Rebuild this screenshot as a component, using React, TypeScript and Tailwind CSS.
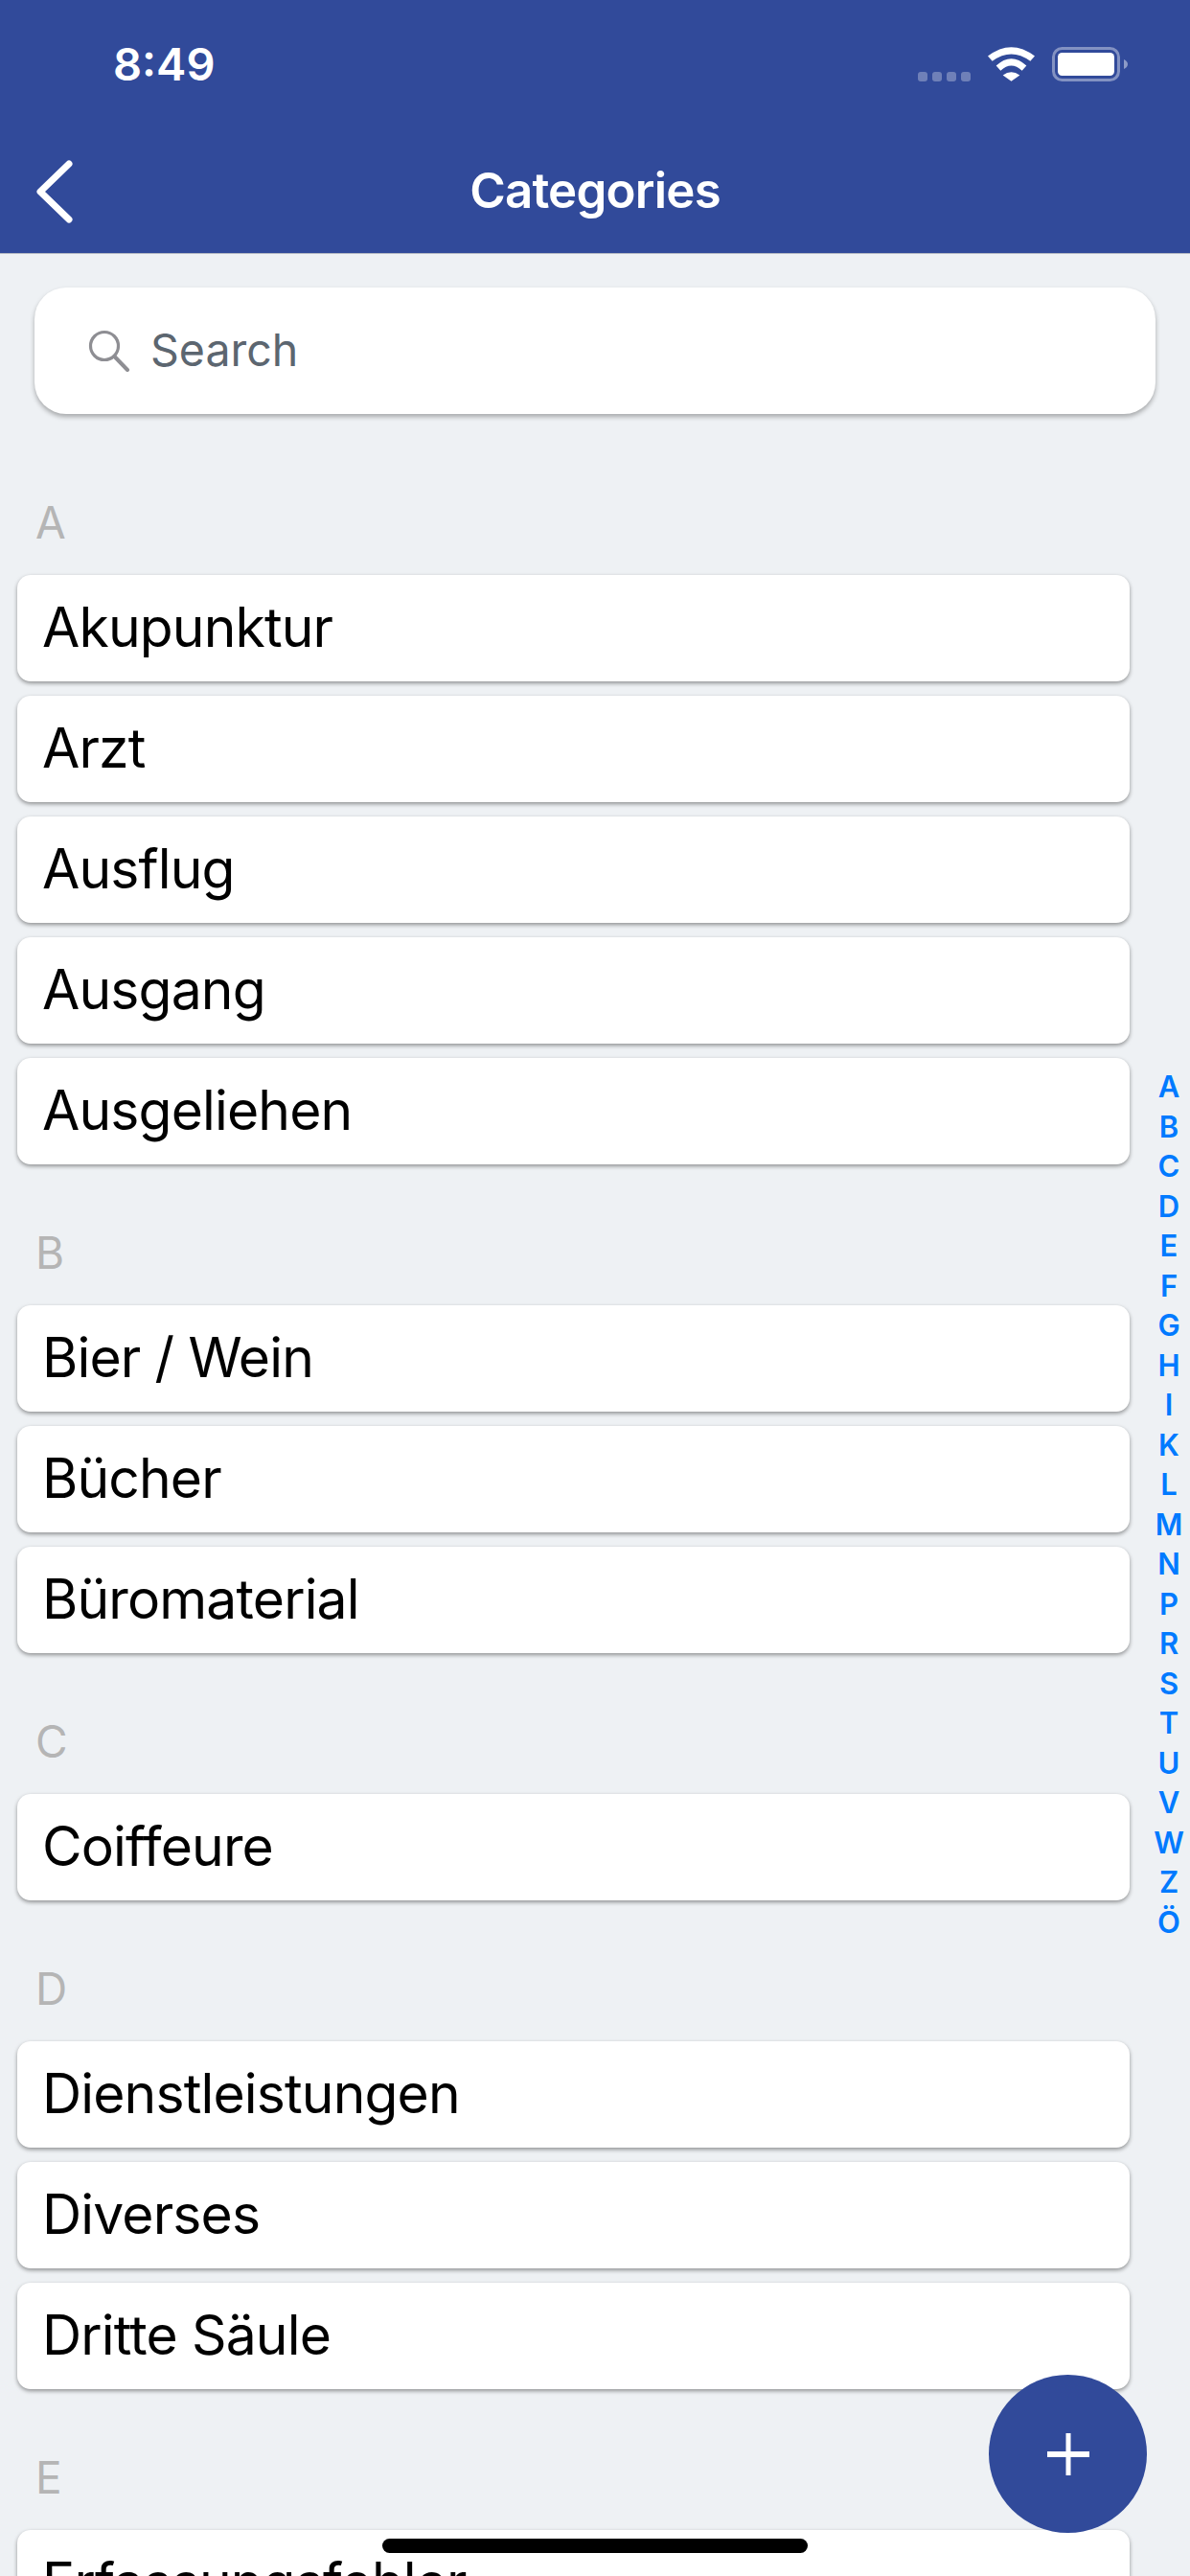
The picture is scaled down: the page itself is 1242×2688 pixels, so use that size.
const sections = [
  { letter: "A", items: ["Akupunktur", "Arzt", "Ausflug", "Ausgang", "Ausgeliehen"] },
  { letter: "B", items: ["Bier / Wein", "Bücher", "Büromaterial"] },
  { letter: "C", items: ["Coiffeure"] },
  { letter: "D", items: ["Dienstleistungen", "Diverses", "Dritte Säule"] },
  { letter: "E", items: ["Erfassungsfehler"] },
];

const indexLetters = "ABCDEFGHIKLMNPRSTUVWZÖ".split("");

function WifiIcon() {
  return (
    <svg width="49" height="36" viewBox="0 0 147 107" fill="white">
      <path d="M0 28 Q73.5 -28 147 28 L133 44 Q73.5 0 14 44 Z" />
      <path d="M26 58 Q73.5 14 121 58 L107 74 Q73.5 42 40 74 Z" />
      <path d="M47 88 Q73.5 68 100 88 L73.5 107 Z" />
    </svg>
  );
}

function BatteryIcon() {
  return (
    <svg width="79" height="36" viewBox="0 0 79 36">
      <rect x="1.5" y="1.5" width="68" height="33" rx="9" fill="none" stroke="white" strokeOpacity="0.4" strokeWidth="3" />
      <rect x="6" y="6" width="59" height="24" rx="4.5" fill="white" />
      <path d="M75 13 C77.5 14 79 16 79 18 C79 20 77.5 22 75 23 Z" fill="white" fillOpacity="0.45" />
    </svg>
  );
}

function StatusBar() {
  return (
    <div className="flex h-[136px] justify-between pl-[118px] pr-[65px]">
      <span className="mt-[39px] text-[47px] leading-[56px] font-semibold text-white">8:49</span>
      <div className="mt-[49px] flex h-[36px] items-start">
        <div className="mt-[26px] mr-[18px] flex gap-[5px]">
          {[0, 1, 2, 3].map((i) => (
            <div key={i} className="h-[10px] w-[10px] rounded-[3px] bg-white/30" />
          ))}
        </div>
        <WifiIcon />
        <div className="ml-[18px]">
          <BatteryIcon />
        </div>
      </div>
    </div>
  );
}

function Header() {
  return (
    <header className="h-[265px] border-b border-[#b4b9c4] bg-[#314a9a]">
      <StatusBar />
      <div className="flex h-[128px] items-center justify-between">
        <div className="w-[120px] pl-[36px]">
          <svg width="42" height="66" viewBox="0 0 42 66" fill="none" stroke="white" strokeWidth="7" strokeLinecap="round" strokeLinejoin="round">
            <path d="M36 4 L6 33 L36 62" />
          </svg>
        </div>
        <h1 className="-mt-[3px] text-[51px] leading-[64px] font-semibold tracking-[-0.8px] text-white">Categories</h1>
        <div className="w-[120px]" />
      </div>
    </header>
  );
}

function SearchBox() {
  return (
    <div className="mt-[35px] ml-[36px] flex h-[132px] w-[1170px] items-center rounded-[33px] bg-white pl-[56px] shadow-[0_3px_5px_rgba(0,0,0,0.3)]">
      <svg width="44" height="44" viewBox="0 0 44 44" fill="none" stroke="#8e8e93" strokeLinecap="round">
        <circle cx="17" cy="17" r="14.5" strokeWidth="3.2" />
        <path d="M27.5 28 L41 42" strokeWidth="4" />
      </svg>
      <span className="-mt-[2px] ml-[21px] text-[46.5px] leading-[60px] text-[#5c6670]">Search</span>
    </div>
  );
}

function CategoryRow({ name }: { name: string }) {
  return (
    <div className="mb-[15px] ml-[18px] flex h-[111px] w-[1161px] items-center rounded-[14px] bg-white pl-[26px] shadow-[0_2px_4px_rgba(0,0,0,0.4)]">
      <span className="-mt-[2px] text-[57px] leading-[70px] tracking-[-0.85px] text-black">{name}</span>
    </div>
  );
}

export default function App() {
  return (
    <div className="relative h-[2688px] w-[1242px] overflow-hidden bg-[#eef1f4] font-['Inter','Liberation_Sans',sans-serif]">
      <Header />
      <SearchBox />
      <div className="mt-[36px]">
        {sections.map((section) => (
          <section key={section.letter}>
            <div className="h-[132px] pt-[50px] pl-[37px] text-[46px] leading-[54px] text-[#b5b5b5]">
              {section.letter}
            </div>
            {section.items.map((name) => (
              <CategoryRow key={name} name={name} />
            ))}
          </section>
        ))}
      </div>

      {/* side index */}
      <div className="absolute top-[1113px] left-[1197px] flex w-[46px] flex-col items-center">
        {indexLetters.map((l) => (
          <span key={l} className="h-[41.5px] text-[31px] leading-[41.5px] font-semibold text-[#007aff]">
            {l}
          </span>
        ))}
      </div>

      {/* add button */}
      <button className="absolute top-[2478px] left-[1032px] flex h-[165px] w-[165px] items-center justify-center rounded-full bg-[#314a9a]">
        <svg width="44" height="44" viewBox="0 0 44 44" fill="white">
          <rect x="19.5" y="0" width="5" height="44" />
          <rect x="0" y="19" width="44" height="6" />
        </svg>
      </button>

      {/* home indicator */}
      <div className="absolute top-[2649px] left-[399px] h-[15px] w-[444px] rounded-[8px] bg-black" />
    </div>
  );
}
